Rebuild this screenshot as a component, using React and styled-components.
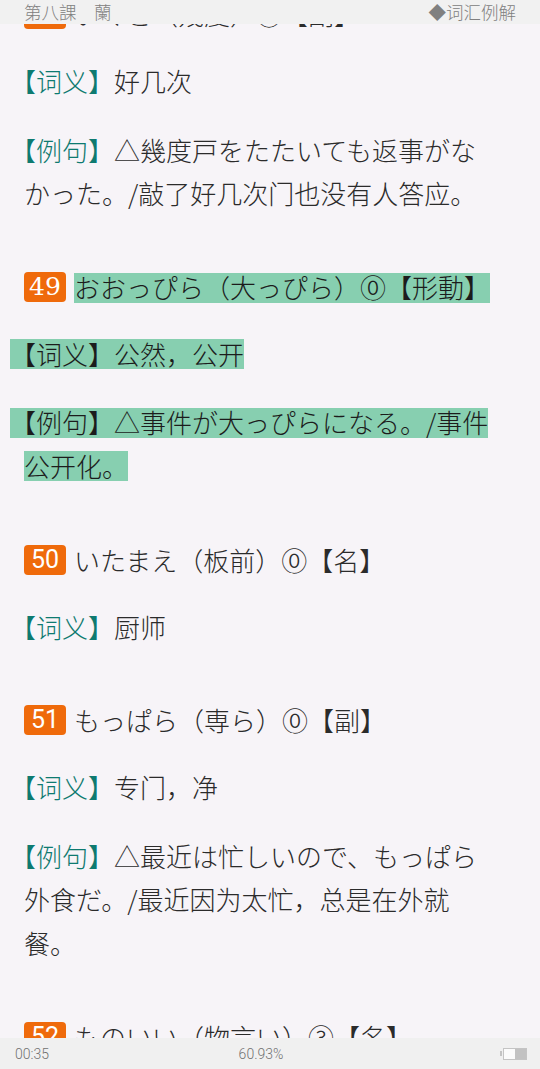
import React from 'react';
import styled, { createGlobalStyle, css } from 'styled-components';

const GlobalStyle = createGlobalStyle`
  html, body {
    margin: 0;
    padding: 0;
    background: #f7f4f8;
  }
  body {
    font-family: "Noto Sans CJK SC", "Noto Sans", sans-serif;
    font-weight: 300;
    color: #2b2b2b;
  }
`;

const Page = styled.div`
  height: 100vh;
  display: flex;
  flex-direction: column;
  overflow: hidden;
`;

const TopBar = styled.header`
  height: 24px;
  flex: 0 0 24px;
  background: #f1f1f1;
  display: flex;
  justify-content: space-between;
  align-items: center;
  padding: 0 24px;
  font-size: 17.5px;
  line-height: 24px;
  color: #808080;
  overflow: hidden;
  z-index: 2;
`;

const Viewport = styled.main`
  flex: 1;
  overflow: hidden;
`;

const List = styled.div`
  margin-top: -32px;
  padding: 0 44px 0 24px;
  display: flex;
  flex-direction: column;
  gap: 50px;
`;

const Item = styled.section`
  display: flex;
  flex-direction: column;
`;

const Head = styled.div`
  display: flex;
  align-items: center;
  gap: 8px;
  height: 44px;
  font-size: 26px;
  line-height: 44px;
  white-space: nowrap;
`;

const Badge = styled.span`
  flex: 0 0 42px;
  height: 30px;
  border-radius: 4px;
  background: #ef6a0b;
  color: #fff;
  font-size: 25px;
  font-weight: 400;
  line-height: 30px;
  text-align: center;
  font-family: ${({ serif }) =>
    serif ? '"DejaVu Serif", serif' : 'Roboto, "Noto Sans", sans-serif'};
`;

const Mark = styled.span`
  ${({ on }) =>
    on &&
    css`
      background: linear-gradient(#87cfb0, #87cfb0) 0 60% / 100% 30px no-repeat;
      -webkit-box-decoration-break: clone;
      box-decoration-break: clone;
      color: #1c1c1c;
    `}
`;

const Para = styled.p`
  margin: ${({ gapTop }) => gapTop}px 0 0;
  font-size: 26px;
  line-height: 43.6px;
  text-indent: -14px;
`;

const Label = styled.span`
  color: ${({ plain }) => (plain ? '#1c1c1c' : '#0e7a70')};
`;

const BottomBar = styled.footer`
  height: 31px;
  flex: 0 0 31px;
  background: #f0f0f0;
  display: grid;
  grid-template-columns: 1fr auto 1fr;
  align-items: center;
  padding: 0 13px 0 15px;
  font-family: Roboto, "Noto Sans", sans-serif;
  font-size: 14px;
  color: #707070;
  z-index: 2;
`;

const Percent = styled.span`
  text-align: center;
  margin-right: 20px;
`;

const Battery = styled.span`
  justify-self: end;
  display: flex;
  align-items: center;
  gap: 1px;
`;

const Nub = styled.span`
  width: 2px;
  height: 5px;
  background: #c4c4c4;
`;

const Cell = styled.span`
  width: 22px;
  height: 10px;
  border: 1px solid #c4c4c4;
  background: linear-gradient(to right, #fbfbfb 50%, #c2c2c2 50%);
`;

const entries = [
  {
    no: 48,
    word: 'いくど（幾度）①【副】',
    meaning: '好几次',
    example: '△幾度戸をたたいても返事がなかった。/敲了好几次门也没有人答应。',
  },
  {
    no: 49,
    serif: true,
    marked: true,
    word: 'おおっぴら（大っぴら）⓪【形動】',
    meaning: '公然，公开',
    example: '△事件が大っぴらになる。/事件公开化。',
  },
  {
    no: 50,
    word: 'いたまえ（板前）⓪【名】',
    meaning: '厨师',
  },
  {
    no: 51,
    word: 'もっぱら（専ら）⓪【副】',
    meaning: '专门，净',
    example: '△最近は忙しいので、もっぱら外食だ。/最近因为太忙，总是在外就餐。',
  },
  {
    no: 52,
    word: 'ものいい（物言い）③【名】',
    meaning: '争论',
  },
];

const Entry = ({ no, serif, marked, word, meaning, example }) => (
  <Item>
    <Head>
      <Badge serif={serif}>{no}</Badge>
      <Mark on={marked}>{word}</Mark>
    </Head>
    <Para gapTop={23}>
      <Mark on={marked}>
        <Label plain={marked}>【词义】</Label>
        {meaning}
      </Mark>
    </Para>
    {example && (
      <Para gapTop={25}>
        <Mark on={marked}>
          <Label plain={marked}>【例句】</Label>
          {example}
        </Mark>
      </Para>
    )}
  </Item>
);

const App = () => (
  <Page>
    <GlobalStyle />
    <TopBar>
      <span>第八課　蘭</span>
      <span>◆词汇例解</span>
    </TopBar>
    <Viewport>
      <List>
        {entries.map((e) => (
          <Entry key={e.no} {...e} />
        ))}
      </List>
    </Viewport>
    <BottomBar>
      <span>00:35</span>
      <Percent>60.93%</Percent>
      <Battery>
        <Nub />
        <Cell />
      </Battery>
    </BottomBar>
  </Page>
);

export default App;
